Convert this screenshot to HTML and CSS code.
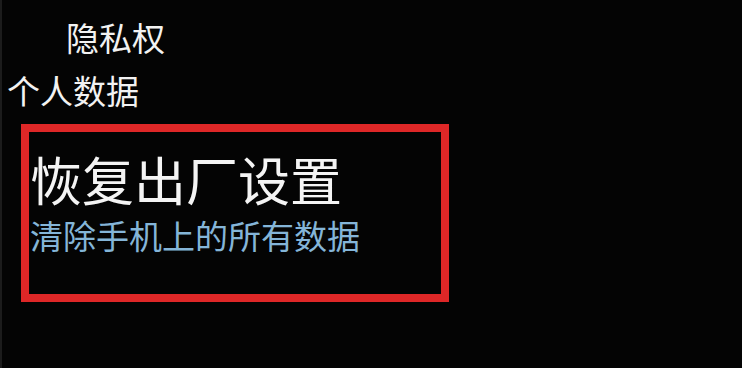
FILE: index.html
```html
<!DOCTYPE html>
<html lang="zh-CN">
<head>
<meta charset="utf-8">
<title>恢复出厂设置</title>
<link rel="stylesheet" href="styles.css">
</head>
<body>
<div class="screen">
  <div class="item-privacy">隐私权</div>
  <div class="section">个人数据</div>
  <div class="highlight">
    <div class="reset-title">恢复出厂设置</div>
    <div class="reset-sub">清除手机上的所有数据</div>
  </div>
</div>
</body>
</html>
```
FILE: styles.css
```css
html, body {
  margin: 0;
  padding: 0;
  background: #040404;
}
.screen {
  width: 742px;
  height: 368px;
  box-sizing: border-box;
  border-left: 2px solid #1c1c1c;
  background: #040404;
  font-family: "Noto Sans CJK SC", "Noto Sans", sans-serif;
  font-weight: 400;
  color: #f2f2f2;
  padding-top: 21px;
  overflow: hidden;
}
.item-privacy {
  font-size: 33px;
  line-height: 33px;
  margin-left: 64px;
}
.section {
  font-size: 33px;
  line-height: 33px;
  margin-top: 20px;
  margin-left: 5px;
}
.highlight {
  margin-top: 17px;
  margin-left: 19px;
  width: 428px;
  height: 178px;
  box-sizing: border-box;
  border: 8px solid #de2727;
  padding: 21px 0 0 1px;
}
.reset-title {
  font-size: 52px;
  line-height: 52px;
  color: #f4f4f4;
}
.reset-sub {
  font-size: 33px;
  line-height: 33px;
  margin-top: 14px;
  color: #84b5d8;
}
```
